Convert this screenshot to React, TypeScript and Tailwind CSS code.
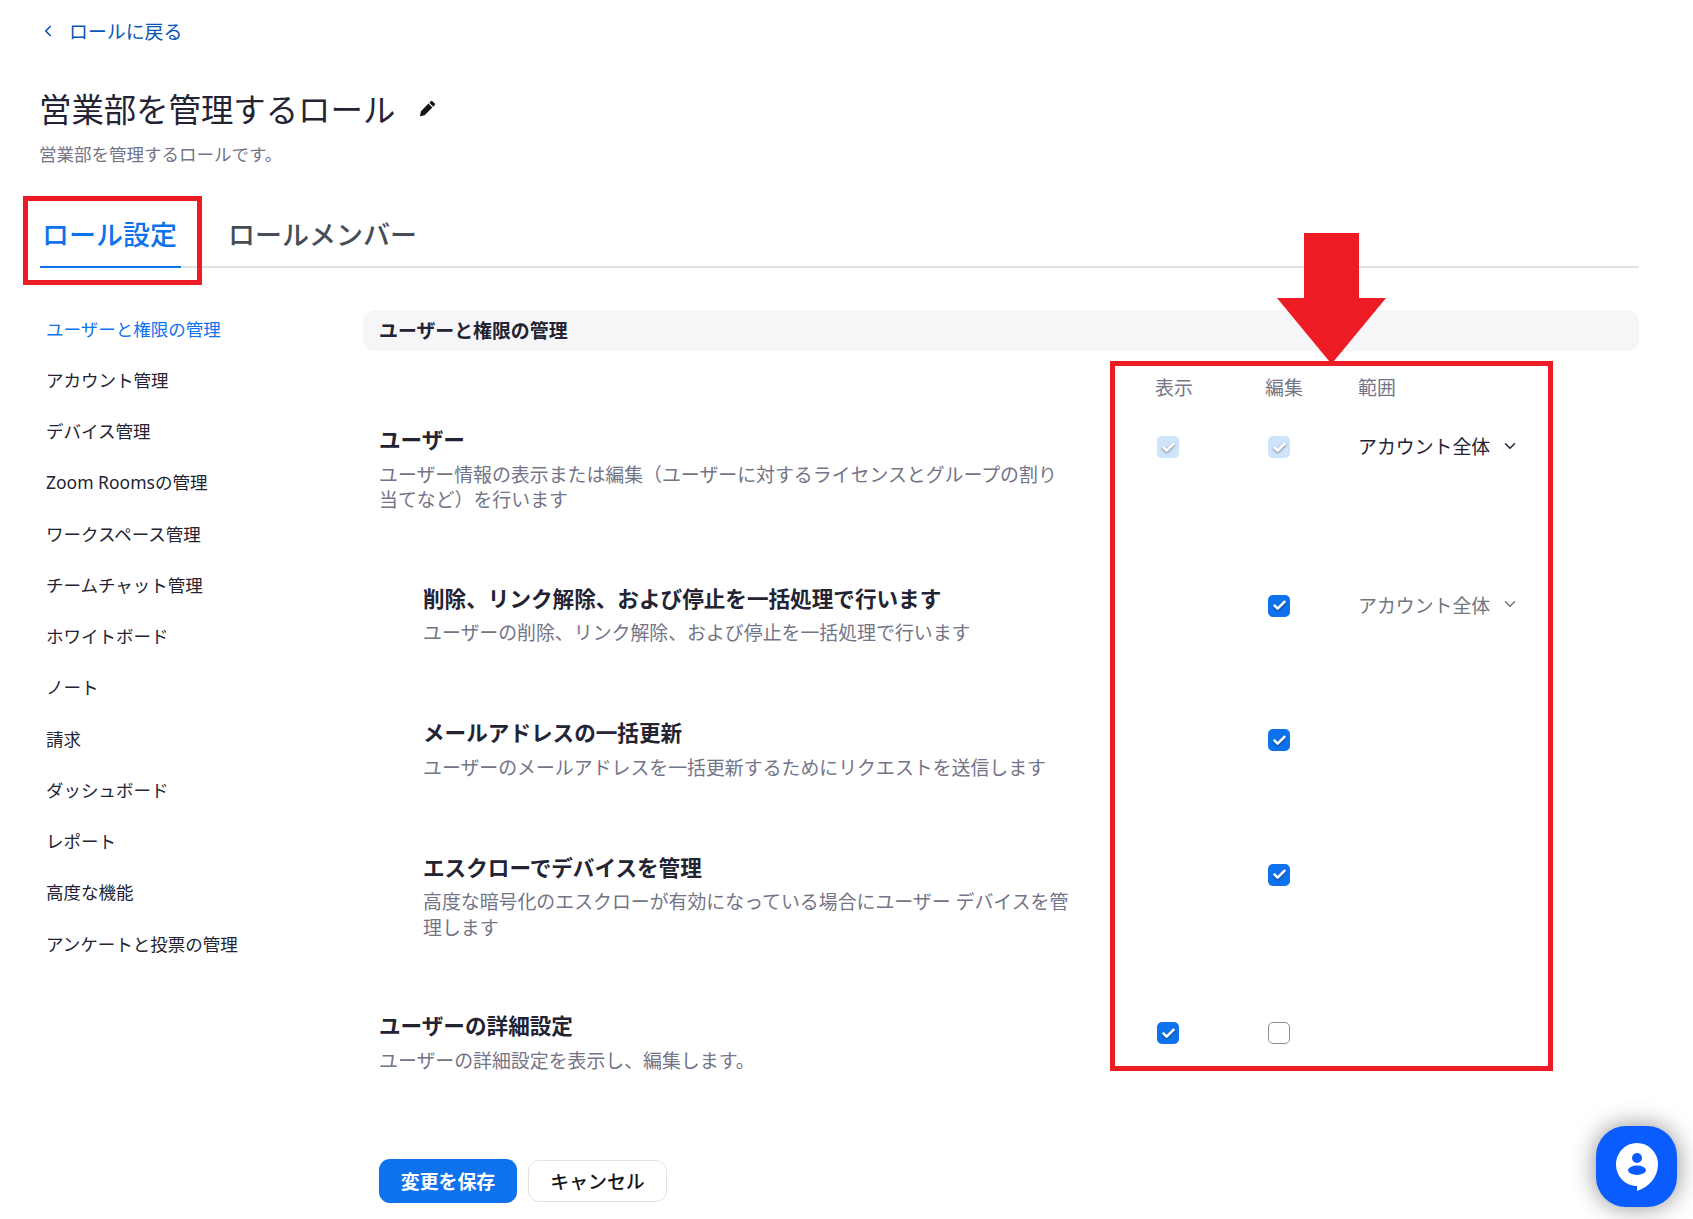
import { Check, ChevronDown, ChevronLeft } from 'lucide-react'

const sideItems = [
  'ユーザーと権限の管理',
  'アカウント管理',
  'デバイス管理',
  'Zoom Roomsの管理',
  'ワークスペース管理',
  'チームチャット管理',
  'ホワイトボード',
  'ノート',
  '請求',
  'ダッシュボード',
  'レポート',
  '高度な機能',
  'アンケートと投票の管理',
]

type Box = 'muted' | 'on' | 'off' | null

interface Row {
  title: string
  desc: string
  view: Box
  edit: Box
  scope?: 'active' | 'disabled'
  nested?: boolean
  spacing: string
}

const rows: Row[] = [
  {
    title: 'ユーザー',
    desc: 'ユーザー情報の表示または編集（ユーザーに対するライセンスとグループの割り当てなど）を行います',
    view: 'muted',
    edit: 'muted',
    scope: 'active',
    spacing: 'flex pb-[70.25px]',
  },
  {
    title: '削除、リンク解除、および停止を一括処理で行います',
    desc: 'ユーザーの削除、リンク解除、および停止を一括処理で行います',
    view: null,
    edit: 'on',
    scope: 'disabled',
    nested: true,
    spacing: 'flex pb-[71.5px]',
  },
  {
    title: 'メールアドレスの一括更新',
    desc: 'ユーザーのメールアドレスを一括更新するためにリクエストを送信します',
    view: null,
    edit: 'on',
    nested: true,
    spacing: 'flex pb-[71.5px]',
  },
  {
    title: 'エスクローでデバイスを管理',
    desc: '高度な暗号化のエスクローが有効になっている場合にユーザー デバイスを管理します',
    view: null,
    edit: 'on',
    nested: true,
    spacing: 'flex pb-[70px]',
  },
  {
    title: 'ユーザーの詳細設定',
    desc: 'ユーザーの詳細設定を表示し、編集します。',
    view: 'on',
    edit: 'off',
    spacing: 'flex',
  },
]

function Checkbox({ kind }: { kind: Box }) {
  if (!kind) return null
  if (kind === 'off') {
    return <span className="block size-[22px] rounded-[5px] border border-[#8f8f9e] bg-white" />
  }
  return (
    <span
      className={
        kind === 'on'
          ? 'flex size-[22px] items-center justify-center rounded-[5px] bg-[#0e72ed]'
          : 'flex size-[22px] items-center justify-center rounded-[5px] bg-[#cfe3fb]'
      }
    >
      <Check className="size-[15px] text-white drop-shadow-[0_1px_1px_rgba(0,0,0,0.45)]" strokeWidth={4} />
    </span>
  )
}

function PermissionRow({ row }: { row: Row }) {
  return (
    <div className={row.spacing}>
      <div className={row.nested ? 'w-[778px] pl-[44px]' : 'w-[778px]'}>
        <h3 className="text-[21.6px] leading-[30px] font-bold text-[#232333]">{row.title}</h3>
        <p
          className={
            row.nested
              ? 'mt-[7.5px] w-[650px] text-[18.9px] leading-[25.5px] text-[#747487]'
              : 'mt-[7.5px] w-[690px] text-[18.9px] leading-[25.5px] text-[#747487]'
          }
        >
          {row.desc}
        </p>
      </div>
      <div className="w-[111px] pt-[11px]">
        <Checkbox kind={row.view} />
      </div>
      <div className="w-[90px] pt-[11px]">
        <Checkbox kind={row.edit} />
      </div>
      {row.scope && (
        <div
          className={
            row.scope === 'active'
              ? 'flex h-[26px] items-center gap-[11px] pt-[19px] text-[18.9px] text-[#232333]'
              : 'flex h-[26px] items-center gap-[11px] pt-[19px] text-[18.9px] text-[#6e7680]'
          }
        >
          アカウント全体
          <ChevronDown className="size-[18px] -translate-y-[2px]" strokeWidth={2} />
        </div>
      )}
    </div>
  )
}

export default function App() {
  return (
    <div className="relative h-[1219px] overflow-hidden bg-white font-['Noto_Sans','Noto_Sans_CJK_JP',sans-serif]">
      <div className="pt-[19px]">
        <a className="ml-[39px] flex items-center gap-[12px] text-[18.9px] leading-[26px] text-[#0956b5]">
          <ChevronLeft className="size-[18px] -translate-y-[1px]" strokeWidth={2.25} />
          ロールに戻る
        </a>

        <div className="mt-[42px] ml-[39px] flex items-center gap-[24px]">
          <h1 className="text-[32.4px] leading-[44px] font-normal text-[#232333]">営業部を管理するロール</h1>
          <svg viewBox="0 0 16 16" className="size-[17px] -translate-y-[1px]" fill="#131619">
            <path d="M11.2 1.1a1 1 0 0 1 1.4 0l2.3 2.3a1 1 0 0 1 0 1.4l-1.5 1.5-3.7-3.7 1.5-1.500ZM8.900 3.400l3.700 3.700-7.300 7.300-4.400.9.900-4.600 7.100-7.300Z" />
          </svg>
        </div>
        <p className="mt-[10px] ml-[39px] text-[17.5px] leading-[26px] text-[#747487]">営業部を管理するロールです。</p>

        <div className="mt-[50px] ml-[40px] flex w-[1599px] border-b-2 border-[#dfe3e8]">
          <div className="-mb-[2px] w-[141px] border-b-2 border-[#0e72ed] pb-[13px] pl-[2px] text-[27px] leading-[36px] font-medium text-[#0e72ed]">
            ロール設定
          </div>
          <div className="ml-[47px] text-[27px] leading-[36px] font-medium text-[#474d57]">ロールメンバー</div>
        </div>

        <div className="mt-[42px] ml-[46px] flex">
          <nav className="flex w-[317px] flex-col gap-[25.25px] pt-[5.5px]">
            {sideItems.map((item, i) => (
              <a
                key={item}
                className={
                  i === 0
                    ? 'text-[17.5px] leading-[26px] text-[#0e72ed]'
                    : 'text-[17.5px] leading-[26px] text-[#232333]'
                }
              >
                {item}
              </a>
            ))}
          </nav>

          <main className="w-[1276px]">
            <div className="flex h-[41px] items-center rounded-[12px] bg-[#f6f6f8] pt-[2px] pl-[16px] text-[18.9px] font-bold text-[#232333]">
              ユーザーと権限の管理
            </div>

            <div className="ml-[16px]">
              <div className="mt-[24px] flex text-[18.9px] leading-[26px] text-[#747487]">
                <span className="ml-[776px] w-[110px]">表示</span>
                <span className="w-[93px]">編集</span>
                <span>範囲</span>
              </div>

              <div className="mt-[24px] flex flex-col">
                {rows.map((row) => (
                  <PermissionRow key={row.title} row={row} />
                ))}
              </div>

              <div className="mt-[85px] flex items-center gap-[11px]">
                <button className="h-[44px] w-[138px] rounded-[11px] bg-[#0e72ed] pt-[1px] text-[18.9px] font-bold text-white">
                  変更を保存
                </button>
                <button className="h-[42px] w-[139px] rounded-[11px] border border-[#dfe3e8] bg-white pt-[1px] text-[18.9px] font-medium text-[#131619]">
                  キャンセル
                </button>
              </div>
            </div>
          </main>
        </div>
      </div>

      {/* annotations over the page */}
      <div className="absolute top-[196px] left-[23px] h-[89px] w-[179px] border-[5px] border-[#ed1c24]" />
      <div className="absolute top-[361px] left-[1110px] h-[710px] w-[443px] border-[5px] border-[#ed1c24]" />
      <svg className="absolute top-[233px] left-[1277px]" width="109" height="131" viewBox="0 0 109 131" fill="#ed1c24">
        <path d="M27 0h55v65h27L54.500 131 0 65h27Z" />
      </svg>

      <div className="absolute top-[1126px] left-[1596px] flex size-[81px] items-center justify-center rounded-[30px] bg-[#0b5cff] shadow-[0_0_24px_rgba(0,0,0,0.45)]">
        <svg viewBox="0 0 42 48" className="h-[48px] w-[42px]">
          <path fill="#fff" d="M21 0a21 21 0 0 1 21 21c0 13-9 23-21 27v-5C9 43 0 33 0 21A21 21 0 0 1 21 0Z" />
          <circle cx="21" cy="15" r="5" fill="#0b5cff" />
          <ellipse cx="21" cy="27.300" rx="9" ry="4.700" fill="#0b5cff" />
        </svg>
      </div>
    </div>
  )
}
